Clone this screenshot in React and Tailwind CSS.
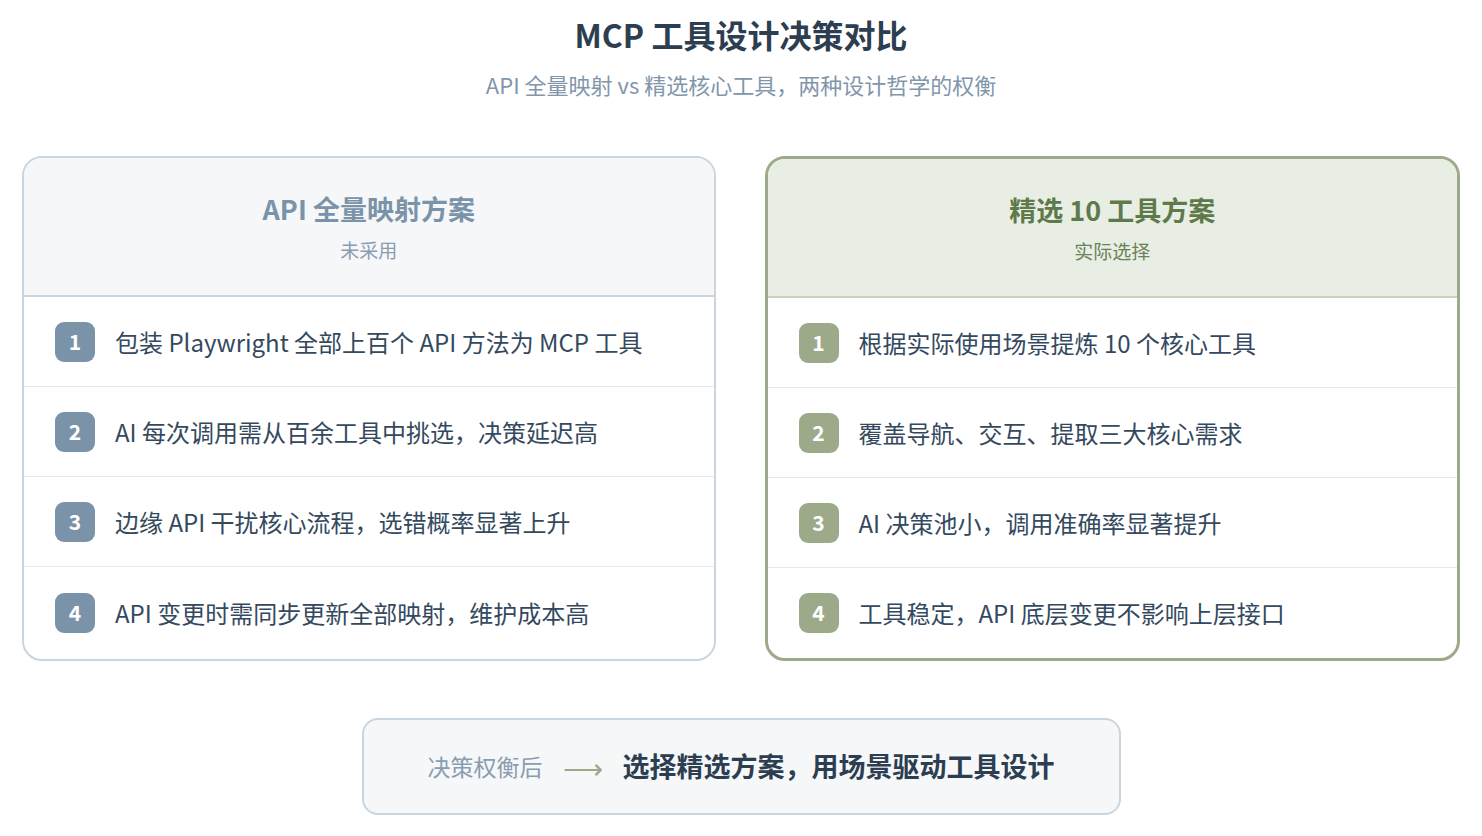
const F = { fontFamily: '"Noto Sans CJK SC", "Noto Sans", sans-serif' };
const left = ["包装 Playwright 全部上百个 API 方法为 MCP 工具","AI 每次调用需从百余工具中挑选，决策延迟高","边缘 API 干扰核心流程，选错概率显著上升","API 变更时需同步更新全部映射，维护成本高"];
const right = ["根据实际使用场景提炼 10 个核心工具","覆盖导航、交互、提取三大核心需求","AI 决策池小，调用准确率显著提升","工具稳定，API 底层变更不影响上层接口"];
function Card({ title, sub, items, green }) {
  return (
    <div className={`flex-1 rounded-[20px] overflow-hidden bg-white flex flex-col ${green ? "border-[3px] border-[#9daa8a]" : "border-2 border-[#c9d6e1]"}`}>
      <div className={`h-[139px] flex flex-col items-center justify-center ${green ? "bg-[#e9eee5] border-b-2 border-[#c5d2c0]" : "bg-[#f5f7f9] border-b-2 border-[#c9d6e1]"}`}>
        <div className={`text-[27px] font-bold leading-none ${green ? "text-[#5e7a4a]" : "text-[#7b93a8]"}`}>{title}</div>
        <div className={`text-[19px] mt-[18px] leading-none ${green ? "text-[#6a8356]" : "text-[#8a9db0]"}`}>{sub}</div>
      </div>
      {items.map((t, i) => (
        <div key={i} className={`h-[90px] flex items-center pl-[31px] gap-[20px] ${i < 3 ? "border-b border-[#e3e9ee]" : ""} ${i===3?"flex-1":""}`}>
          <div className={`w-[40px] h-[40px] rounded-[9px] flex items-center justify-center text-white font-bold text-[21px] ${green ? "bg-[#9daa8a]" : "bg-[#7b93a8]"}`}>{i + 1}</div>
          <div className="text-[24px] text-[#34495e]">{t}</div>
        </div>
      ))}
    </div>
  );
}
export default function App() {
  return (
    <div style={F} className="w-[1482px] h-[836px] bg-white flex flex-col items-center px-[22px]">
      <div className="mt-[14px] text-[32px] font-bold text-[#2c3e50] leading-[40px]">MCP 工具设计决策对比</div>
      <div className="mt-[14px] text-[22px] text-[#8296aa] leading-[32px]">API 全量映射 vs 精选核心工具，两种设计哲学的权衡</div>
      <div className="mt-[56px] w-full flex gap-[49px] h-[505px]">
        <Card title="API 全量映射方案" sub="未采用" items={left} />
        <Card title="精选 10 工具方案" sub="实际选择" items={right} green />
      </div>
      <div className="mt-[57px] w-[759px] h-[97px] rounded-[16px] border-2 border-[#c9d6e1] bg-[#f5f7f9] flex items-center justify-center gap-[20px]">
        <span className="text-[23px] text-[#8a9db0]">决策权衡后</span>
        <span className="text-[28px] text-[#9daa8a] leading-none">⟶</span>
        <span className="text-[27px] font-bold text-[#2c3e50]">选择精选方案，用场景驱动工具设计</span>
      </div>
    </div>
  );
}
